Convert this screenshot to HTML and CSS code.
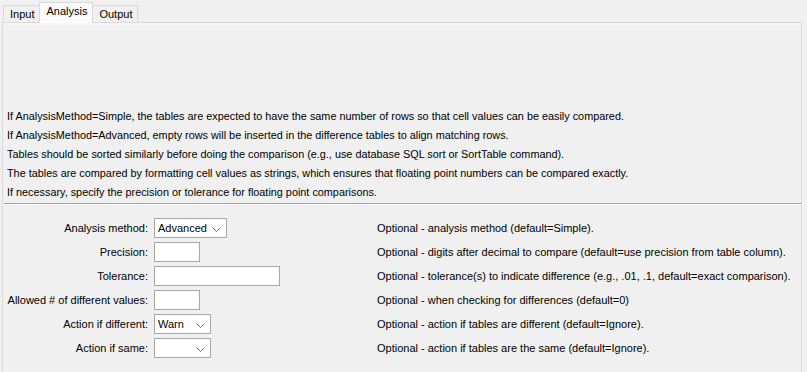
FILE: index.html
```html
<!DOCTYPE html>
<html lang="en">
<head>
  <meta charset="UTF-8" />
  <title>Compare Tables - Analysis</title>
  <link rel="stylesheet" href="styles.css">
</head>
<body>
  <div class="tabs">
    <div class="tab">Input</div>
    <div class="tab active">Analysis</div>
    <div class="tab">Output</div>
  </div>

  <div class="panel">
    <div class="notes">
      <p>If AnalysisMethod=Simple, the tables are expected to have the same number of rows so that cell values can be easily compared.</p>
      <p>If AnalysisMethod=Advanced, empty rows will be inserted in the difference tables to align matching rows.</p>
      <p>Tables should be sorted similarly before doing the comparison (e.g., use database SQL sort or SortTable command).</p>
      <p>The tables are compared by formatting cell values as strings, which ensures that floating point numbers can be compared exactly.</p>
      <p>If necessary, specify the precision or tolerance for floating point comparisons.</p>
    </div>

    <div class="form">
      <label class="field-label">Analysis method:</label>
      <div class="field"><div class="choice w72"><span>Advanced</span><svg class="chev" width="9" height="5" viewBox="0 0 9 5"><path d="M0.5 0.5 L4.5 4.5 L8.5 0.5" fill="none" stroke="#6d6d6d" stroke-width="1"/></svg></div></div>
      <div class="desc">Optional - analysis method (default=Simple).</div>

      <label class="field-label">Precision:</label>
      <div class="field"><div class="text-input w46"></div></div>
      <div class="desc">Optional - digits after decimal to compare (default=use precision from table column).</div>

      <label class="field-label">Tolerance:</label>
      <div class="field"><div class="text-input w126"></div></div>
      <div class="desc">Optional - tolerance(s) to indicate difference (e.g., .01, .1, default=exact comparison).</div>

      <label class="field-label">Allowed # of different values:</label>
      <div class="field"><div class="text-input w46"></div></div>
      <div class="desc">Optional - when checking for differences (default=0)</div>

      <label class="field-label">Action if different:</label>
      <div class="field"><div class="choice w57"><span>Warn</span><svg class="chev" width="9" height="5" viewBox="0 0 9 5"><path d="M0.5 0.5 L4.5 4.5 L8.5 0.5" fill="none" stroke="#6d6d6d" stroke-width="1"/></svg></div></div>
      <div class="desc">Optional - action if tables are different (default=Ignore).</div>

      <label class="field-label">Action if same:</label>
      <div class="field"><div class="choice w57"><span></span><svg class="chev" width="9" height="5" viewBox="0 0 9 5"><path d="M0.5 0.5 L4.5 4.5 L8.5 0.5" fill="none" stroke="#6d6d6d" stroke-width="1"/></svg></div></div>
      <div class="desc">Optional - action if tables are the same (default=Ignore).</div>
    </div>
  </div>
</body>
</html>
```

FILE: styles.css
```css
body {
  margin: 0;
  font-family: Tahoma, "Liberation Sans", Arial, sans-serif;
  font-size: 11px;
  color: #000;
  background-color: #f0f0f0;
  overflow: hidden;
}

.tabs {
  display: flex;
  align-items: flex-end;
  padding: 2px 0 0 3px;
  height: 20px;
}

.tab {
  height: 16px;
  line-height: 17px;
  padding: 0 5px 0 6px;
  border: 1px solid #d9d9d9;
  border-bottom: none;
  background-color: #f0f0f0;
  margin-right: -1px;
}

.tab.active {
  height: 20px;
  line-height: 17px;
  background-color: #fafafa;
  position: relative;
  z-index: 1;
  margin-bottom: -1px;
}

.panel {
  margin: 0 5px 0 2px;
  border: 1px solid #d9d9d9;
  border-bottom: none;
  height: 360px;
  box-shadow: inset 0 2px 0 #f6f6f6;
}

.notes {
  padding: 84px 3px 1px 3px;
  border-bottom: 1px solid #a0a0a0;
  box-shadow: 0 1px 0 #ffffff;
  margin: 0 0 0 1px;
}

.notes p {
  margin: 0;
  height: 19px;
  line-height: 19px;
  white-space: nowrap;
  font-size: 10.85px;
}

.form {
  display: grid;
  grid-template-columns: 145px 217px 1fr;
  column-gap: 6px;
  grid-auto-rows: 24px;
  align-items: center;
  padding-top: 12px;
}

.field-label {
  text-align: right;
  white-space: nowrap;
}

.desc {
  white-space: nowrap;
}

.text-input,
.choice {
  box-sizing: border-box;
  height: 20px;
  background-color: #fff;
  border: 1px solid #a7a7a7;
}

.choice {
  display: flex;
  align-items: center;
  justify-content: space-between;
  padding: 0 5px 0 3px;
}

.chev {
  margin-top: 2px;
}

.w46 { width: 46px; }
.w57 { width: 57px; }
.w72 { width: 73px; }
.w126 { width: 126px; }
```
